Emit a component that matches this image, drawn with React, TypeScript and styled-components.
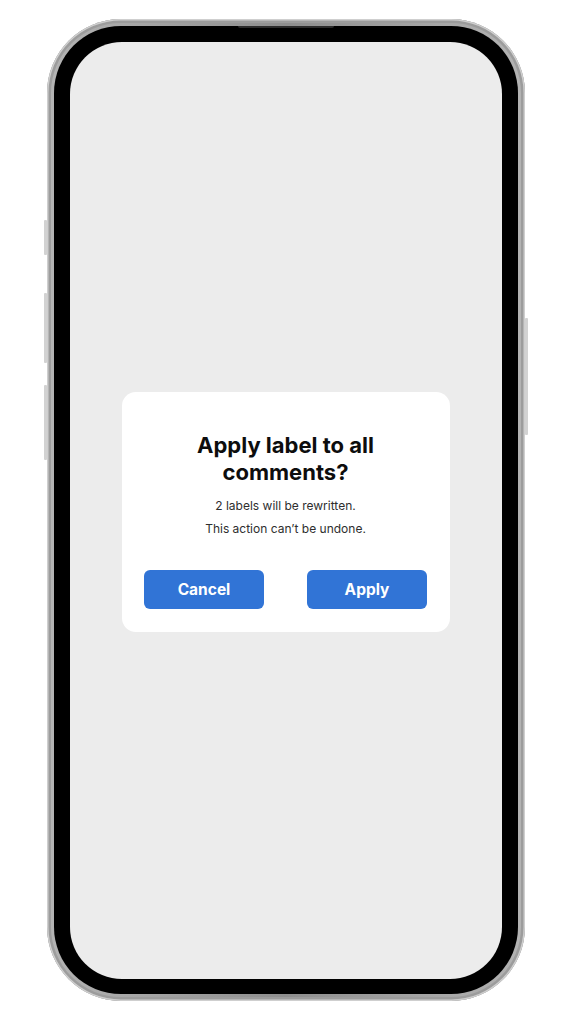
import React from 'react';
import styled, { createGlobalStyle } from 'styled-components';

const GlobalStyle = createGlobalStyle`
  html, body {
    margin: 0;
    padding: 0;
    background: #ffffff;
    font-family: Inter, "Noto Sans", sans-serif;
  }
`;

const Page = styled.div`
  width: 574px;
  height: 1024px;
  padding: 19px 0 0 47px;
  box-sizing: border-box;
`;

const Phone = styled.div`
  position: relative;
  width: 478px;
  height: 982px;
  box-sizing: border-box;
  padding: 7px;
  border-radius: 74px;
  background: linear-gradient(90deg, #b4b4b4, #8e8e8e 50%, #b4b4b4);
  box-shadow: inset 0 0 0 1.5px #cfcfcf, inset 0 0 0 4px #9c9c9c;
`;

const Bezel = styled.div`
  height: 100%;
  box-sizing: border-box;
  padding: 16px 16px 15px;
  border-radius: 67px;
  background: #000;
`;

const Screen = styled.div`
  height: 100%;
  box-sizing: border-box;
  padding-top: 2px;
  border-radius: 52px;
  background: #ececec;
  display: flex;
  align-items: center;
  justify-content: center;
`;

const Speaker = styled.div`
  position: absolute;
  top: 7px;
  left: 191px;
  width: 96px;
  height: 2px;
  border-radius: 0 0 4px 4px;
  background: #2a2a2a;
`;

const SideKey = styled.div<{ $side: 'left' | 'right'; $top: number; $height: number }>`
  position: absolute;
  top: ${(p) => p.$top}px;
  ${(p) => (p.$side === 'left' ? 'left: -3px;' : 'right: -3px;')}
  width: 3px;
  height: ${(p) => p.$height}px;
  background: #d2d2d2;
  border-radius: 1px;
`;

const Dialog = styled.div`
  width: 328px;
  box-sizing: border-box;
  padding: 40px 23px 23px 22px;
  border-radius: 14px;
  background: #ffffff;
  display: flex;
  flex-direction: column;
  align-items: center;
  text-align: center;
`;

const Title = styled.h2`
  margin: 0;
  font-size: 22px;
  line-height: 27px;
  font-weight: 700;
  color: #0d0d0d;
`;

const Message = styled.div`
  margin-top: 8px;
  font-size: 12px;
  line-height: 23px;
  color: #2e2e2e;
`;

const Actions = styled.div`
  margin-top: 30px;
  width: 100%;
  display: flex;
  justify-content: space-between;
`;

const Button = styled.button`
  width: 120px;
  height: 39px;
  border: none;
  border-radius: 6px;
  background: #3174d6;
  color: #ffffff;
  font-family: Inter, "Noto Sans", sans-serif;
  font-size: 15.5px;
  font-weight: 700;
  cursor: pointer;
`;

export default function App() {
  return (
    <>
      <GlobalStyle />
      <Page>
        <Phone>
          <SideKey $side="left" $top={201} $height={35} />
          <SideKey $side="left" $top={274} $height={70} />
          <SideKey $side="left" $top={366} $height={75} />
          <SideKey $side="right" $top={299} $height={117} />
          <Speaker />
          <Bezel>
            <Screen>
              <Dialog>
                <Title>
                  Apply label to all
                  <br />
                  comments?
                </Title>
                <Message>
                  2 labels will be rewritten.
                  <br />
                  This action can’t be undone.
                </Message>
                <Actions>
                  <Button>Cancel</Button>
                  <Button>Apply</Button>
                </Actions>
              </Dialog>
            </Screen>
          </Bezel>
        </Phone>
      </Page>
    </>
  );
}
